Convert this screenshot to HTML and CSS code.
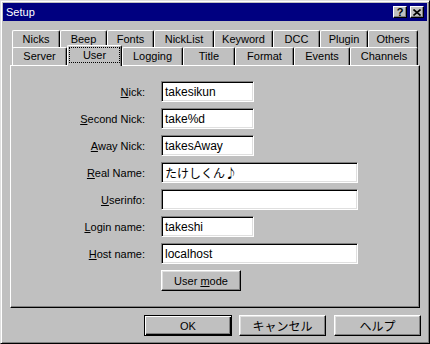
FILE: index.html
```html
<!DOCTYPE html>
<html>
<head>
<meta charset="utf-8">
<link rel="stylesheet" href="styles.css">
</head>
<body>
<div class="window">
  <div class="titlebar">
    <span class="title">Setup</span>
    <div class="caption-btns">
      <span class="cbtn">?</span>
      <span class="cbtn"><svg width="8" height="7" viewBox="0 0 8 7"><path d="M0.5 0.5 L7.5 6.5 M7.5 0.5 L0.5 6.5" stroke="#000" stroke-width="1.6" fill="none"/></svg></span>
    </div>
  </div>
  <div class="client">
    <div class="tabs">
      <div class="tabrow back">
        <div class="tab w48">Nicks</div>
        <div class="tab w47">Beep</div>
        <div class="tab w47">Fonts</div>
        <div class="tab w60">NickList</div>
        <div class="tab w59">Keyword</div>
        <div class="tab w47">DCC</div>
        <div class="tab w48">Plugin</div>
        <div class="tab w50">Others</div>
      </div>
      <div class="tabrow front">
        <div class="tab w55">Server</div>
        <div class="tab w55 selected"><span class="focus">User</span></div>
        <div class="tab w61">Logging</div>
        <div class="tab w52">Title</div>
        <div class="tab w59">Format</div>
        <div class="tab w56">Events</div>
        <div class="tab w68">Channels</div>
      </div>
    </div>
    <div class="panel">
      <div class="form">
        <div class="lbl"><u>N</u>ick:</div>
        <div class="field short">takesikun</div>
        <div class="lbl"><u>S</u>econd Nick:</div>
        <div class="field short">take%d</div>
        <div class="lbl"><u>A</u>way Nick:</div>
        <div class="field short">takesAway</div>
        <div class="lbl"><u>R</u>eal Name:</div>
        <div class="field long jp">たけしくん♪</div>
        <div class="lbl"><u>U</u>serinfo:</div>
        <div class="field long"></div>
        <div class="lbl"><u>L</u>ogin name:</div>
        <div class="field short">takeshi</div>
        <div class="lbl"><u>H</u>ost name:</div>
        <div class="field long">localhost</div>
        <div class="lbl"></div>
        <div class="btn usermode"><span>User <u>m</u>ode</span></div>
      </div>
    </div>
    <div class="buttons">
      <div class="btn default ok">OK</div>
      <div class="btn cancel jp">キャンセル</div>
      <div class="btn helpbtn jp">ヘルプ</div>
    </div>
  </div>
</div>
</body>
</html>
```
FILE: styles.css
```css
html, body {
  margin: 0;
  padding: 0;
  background: #c0c0c0;
}
body {
  font-family: "Liberation Sans", "Noto Sans CJK JP", sans-serif;
  font-size: 11px;
  color: #000;
}
.window {
  width: 430px;
  height: 344px;
  box-sizing: border-box;
  background: #c0c0c0;
  border-style: solid;
  border-width: 1px;
  border-color: #dfdfdf #000 #000 #dfdfdf;
  box-shadow: inset 1px 1px #fff, inset -1px -1px #808080;
  padding: 2px;
  display: flex;
  flex-direction: column;
}
.titlebar {
  height: 18px;
  background: #000080;
  display: flex;
  align-items: center;
  justify-content: space-between;
  padding: 0 3px 0 2px;
}
.title {
  color: #fff;
  font-size: 11px;
  padding-left: 1px;
}
.caption-btns {
  display: flex;
  gap: 3px;
}
.cbtn {
  width: 14px;
  height: 12px;
  box-sizing: border-box;
  background: #c0c0c0;
  border-style: solid;
  border-width: 1px;
  border-color: #fff #000 #000 #fff;
  box-shadow: inset -1px -1px #808080;
  display: flex;
  align-items: center;
  justify-content: center;
  font-weight: bold;
  font-size: 11px;
  line-height: 10px;
}
.client {
  padding: 9px 7px 0 7px;
  display: flex;
  flex-direction: column;
}
.tabs {
  padding: 0 2px;
}
.tabrow {
  display: flex;
  align-items: flex-end;
}
.tabrow.back {
  height: 17px;
}
.tabrow.front {
  height: 18px;
}
.tab {
  box-sizing: border-box;
  height: 100%;
  display: flex;
  align-items: center;
  justify-content: center;
  border-style: solid;
  border-width: 1px 1px 0 1px;
  border-color: #fff #000 #000 #fff;
  border-radius: 2px 2px 0 0;
  box-shadow: inset -1px 0 #808080;
  background: #c0c0c0;
  white-space: nowrap;
  padding-bottom: 1px;
}
.back .tab {
  height: 18px;
  align-self: flex-start;
  padding-bottom: 2px;
}
.tab.selected {
  height: 21px;
  margin-bottom: -1px;
  position: relative;
  z-index: 2;
  align-items: flex-start;
  padding: 1px 1px 0 1px;
}
.focus {
  flex: 1;
  height: 16px;
  box-sizing: border-box;
  border: 1px dotted #000;
  display: flex;
  align-items: center;
  justify-content: center;
  padding-bottom: 1px;
}
.w47 { width: 47px; }
.w48 { width: 48px; }
.w50 { width: 50px; }
.w52 { width: 52px; }
.w55 { width: 55px; }
.w56 { width: 56px; }
.w59 { width: 59px; }
.w60 { width: 60px; }
.w61 { width: 61px; }
.w68 { width: 68px; }
.panel {
  height: 243px;
  box-sizing: border-box;
  border-style: solid;
  border-width: 1px;
  border-color: #fff #000 #000 #fff;
  box-shadow: inset -1px -1px #808080;
  position: relative;
  z-index: 1;
}
.form {
  display: grid;
  grid-template-columns: 134px auto;
  grid-auto-rows: 21px;
  column-gap: 16px;
  row-gap: 6px;
  padding-top: 15px;
  justify-items: start;
}
.lbl {
  justify-self: end;
  align-self: center;
  white-space: nowrap;
}
.field {
  height: 21px;
  box-sizing: border-box;
  background: #fff;
  border-style: solid;
  border-width: 1px;
  border-color: #808080 #fff #fff #808080;
  box-shadow: inset 1px 1px #000, inset -1px -1px #dfdfdf;
  font-size: 12px;
  padding: 0 0 0 3px;
  display: flex;
  align-items: center;
  white-space: nowrap;
}
.field.short { width: 93px; }
.field.long { width: 197px; }
.jp {
  font-family: "Noto Sans CJK JP", sans-serif;
  font-size: 12px;
}
.btn {
  height: 21px;
  box-sizing: border-box;
  background: #c0c0c0;
  border-style: solid;
  border-width: 1px;
  border-color: #fff #000 #000 #fff;
  box-shadow: inset -1px -1px #808080, inset 1px 1px #dfdfdf;
  display: flex;
  align-items: center;
  justify-content: center;
  white-space: nowrap;
}
.btn.jp {
  font-size: 12px;
}
.usermode {
  width: 80px;
  font-size: 11px;
}
.buttons {
  display: flex;
  justify-content: flex-end;
  padding-top: 7px;
  margin-right: -1px;
}
.btn.default {
  border-color: #000;
  box-shadow: inset 1px 1px #fff, inset -1px -1px #000, inset -2px -2px #808080;
}
.ok { width: 88px; }
.cancel { width: 87px; margin-left: 7px; }
.helpbtn { width: 87px; margin-left: 8px; }
```
